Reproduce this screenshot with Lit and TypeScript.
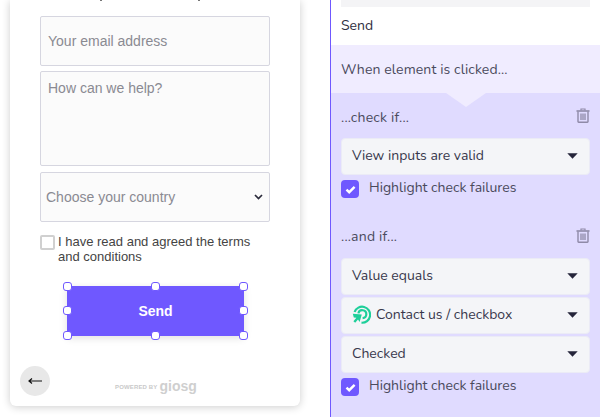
import { LitElement, html, css } from "lit";
import { customElement } from "lit/decorators.js";

const caret = html`<svg class="caret" width="11" height="6" viewBox="0 0 11 6"><path d="M0.3 0.3h10.4L5.5 5.8z" fill="#24243a"/></svg>`;
const trash = html`<svg class="trash" width="14" height="15" viewBox="0 0 14 15" fill="none" stroke="#8f8aa8" stroke-width="1.4"><path d="M0.5 3h13" stroke-width="1.6"/><path d="M5 2.6V1h4v1.6" stroke-width="1.2"/><path d="M2 3.5V13.6a.6.6 0 0 0 .6.6h8.8a.6.6 0 0 0 .6-.6V3.5"/><path d="M5 5.5v6.5M7 5.5v6.5M9 5.5v6.5" stroke-width="1.3"/></svg>`;
const check = html`<span class="check"><svg width="11" height="9" viewBox="0 0 11 9"><path d="M1.5 4.6 4.2 7.2 9.6 1.8" fill="none" stroke="#fff" stroke-width="2.4"/></svg></span>`;
const target = html`<svg class="target" width="19" height="19" viewBox="0 0 19 19" fill="none" stroke="#1ecf9a" stroke-width="2.2"><path d="M2.6 7A8 8 0 1 1 9.5 17.7" /><path d="M6.4 8.4A4 4 0 1 1 10.6 13.2" /><path d="M0.8 8.8 9.8 9.6 7.6 17 6 14.4 3.2 17.8 1.4 16.2 4.4 12.8 1.8 12.4z" fill="#1ecf9a" stroke="none"/></svg>`;

@customElement("app-root")
export class AppRoot extends LitElement {
  static styles = css`
    :host { display: block; width: 600px; height: 417px; overflow: hidden; background: #fff; position: relative; }
    .page { display: flex; height: 417px; }
    .left { width: 330px; flex: none; padding: 0 0 0 10px; box-sizing: border-box; }
    .card {
      width: 290px; height: 406px; background: #fff; border-radius: 0 0 6px 6px;
      box-shadow: 0 1px 8px rgba(0, 0, 0, 0.2); padding: 0 30px; box-sizing: border-box;
      font-family: "Liberation Sans", Arial, sans-serif; display: flex; flex-direction: column; position: relative;
    }
    .cut { height: 1px; margin-bottom: 15px; display: flex; gap: 96px; padding-left: 60px; }
    .cut span { width: 2px; height: 1px; background: #777; }
    .field {
      border: 1px solid #d6d6e0; border-radius: 2px; background: #fbfbfb; box-sizing: border-box;
      color: #8a8a92; font-size: 14px; width: 230px; display: flex;
    }
    .email { height: 50px; align-items: center; padding-left: 7px; }
    .msg { height: 95px; margin-top: 5px; padding: 8px 7px; }
    .country { height: 50px; margin-top: 6px; align-items: center; padding: 0 6px 0 5px; justify-content: space-between; }
    .terms { display: flex; gap: 2px; margin-top: 12px; color: #444; font-size: 13px; line-height: 15px; }
    .box { width: 11px; height: 11px; border: 2px solid #d0d0d0; border-radius: 2px; flex: none; margin-top: 1px; margin-right: 1px; background: #fff; }
    .btnrow { display: flex; justify-content: center; margin-top: 22px; padding-left: 1px; }
    .send {
      position: relative; width: 177px; height: 50px; background: #6f58ff; color: #fff; font-weight: 700; font-size: 14px;
      display: flex; align-items: center; justify-content: center; box-shadow: 0 2px 8px rgba(0,0,0,.12);
    }
    .h { position: absolute; width: 7px; height: 7px; background: #fff; border: 1px solid #6f58ff; border-radius: 3px; }
    .back {
      position: absolute; left: 10px; top: 366px; width: 30px; height: 30px; border-radius: 50%; background: #e8e8e8;
      display: flex; align-items: center; justify-content: center;
    }
    .powered {
      position: absolute; left: 105px; top: 379px; display: flex; align-items: center; gap: 2px; color: #c9c9c9; white-space: nowrap;
    }
    .powered small { font-size: 6px; font-weight: 700; letter-spacing: 0.15px; margin-top: 1px; }
    .powered b { font-size: 14px; font-weight: 700; line-height: 14px; color: #cfcfcf; }

    .right {
      width: 270px; flex: none; height: 417px; border-left: 1px solid #6f58ff; box-sizing: border-box;
      font-family: "Nunito", "Lato", sans-serif; color: #33334a; font-size: 14px;
    }
    .topbar { height: 7px; margin: 0 10px; background: #f4f4f6; }
    .sendlabel { height: 38px; padding: 9px 10px 0; box-sizing: border-box; color: #2e2e3e; }
    .when { height: 48px; background: #f0ecff; display: flex; align-items: center; padding: 0 10px; letter-spacing: .12px; color: #4a4a5c; }
    .rules { background: #e0dbff; height: 324px; padding: 0 10px; position: relative; }
    .notch {
      position: absolute; left: 115px; top: 0; width: 0; height: 0;
      border-left: 20px solid transparent; border-right: 20px solid transparent; border-top: 14px solid #f0ecff;
    }
    .rowhead { display: flex; justify-content: space-between; align-items: center; height: 20px; color: #4a4a5c; letter-spacing: .2px; }
    .rowhead .trash { align-self: flex-start; margin-top: 1px; }
    .first { padding-top: 14px; }
    .second { padding-top: 26px; }
    .second .rowhead .trash { margin-top: 2px; }
    .second .sels { margin-top: 12px; }
    .sel {
      height: 37px; background: #f4f5f8; border: 1px solid #ebebf6; border-radius: 4px; box-sizing: border-box;
      display: flex; align-items: center; justify-content: space-between; padding: 0 11px 2px 10px; color: #38384c;
    }
    .sels { margin-top: 11px; display: flex; flex-direction: column; gap: 2px; }
    .lab { display: flex; align-items: center; gap: 5px; }
    .hl { display: flex; gap: 10px; align-items: flex-start; height: 20px; margin-top: 5px; color: #4a4a5c; line-height: 15px; }
    .check { width: 18px; height: 18px; background: #6f58ff; border-radius: 4px; display: flex; align-items: center; justify-content: center; flex: none; }
  `;

  private handles() {
    const pts = [[-4, -4], [84, -4], [172, -4], [-4, 20], [172, 20], [-4, 45], [84, 45], [172, 45]];
    return pts.map(([x, y]) => html`<span class="h" style="left:${x}px;top:${y}px"></span>`);
  }

  render() {
    return html`<div class="page">
      <div class="left">
        <div class="card">
          <div class="cut"><span></span><span></span></div>
          <div class="field email">Your email address</div>
          <div class="field msg">How can we help?</div>
          <div class="field country"><span>Choose your country</span>
            <svg width="9" height="6" viewBox="0 0 9 6"><path d="M1 1l3.5 3.5L8 1" fill="none" stroke="#2a2a3a" stroke-width="1.7"/></svg>
          </div>
          <div class="terms"><span class="box"></span><span>I have read and agreed the terms<br />and conditions</span></div>
          <div class="btnrow"><div class="send">Send${this.handles()}</div></div>
          <div class="back"><svg width="14" height="8" viewBox="0 0 14 8"><path d="M1 4h13M4 1.5 1 4l3 2.5" fill="none" stroke="#111" stroke-width="1.2"/></svg></div>
          <div class="powered"><small>POWERED BY</small><b>giosg</b></div>
        </div>
      </div>
      <div class="right">
        <div class="topbar"></div>
        <div class="sendlabel">Send</div>
        <div class="when">When element is clicked...</div>
        <div class="rules">
          <div class="notch"></div>
          <div class="first">
            <div class="rowhead"><span>...check if...</span>${trash}</div>
            <div class="sels"><div class="sel"><span>View inputs are valid</span>${caret}</div></div>
            <div class="hl">${check}<span>Highlight check failures</span></div>
          </div>
          <div class="second">
            <div class="rowhead"><span>...and if...</span>${trash}</div>
            <div class="sels">
              <div class="sel"><span>Value equals</span>${caret}</div>
              <div class="sel"><span class="lab">${target}Contact us / checkbox</span>${caret}</div>
              <div class="sel"><span>Checked</span>${caret}</div>
            </div>
            <div class="hl">${check}<span>Highlight check failures</span></div>
          </div>
        </div>
      </div>
    </div>`;
  }
}
